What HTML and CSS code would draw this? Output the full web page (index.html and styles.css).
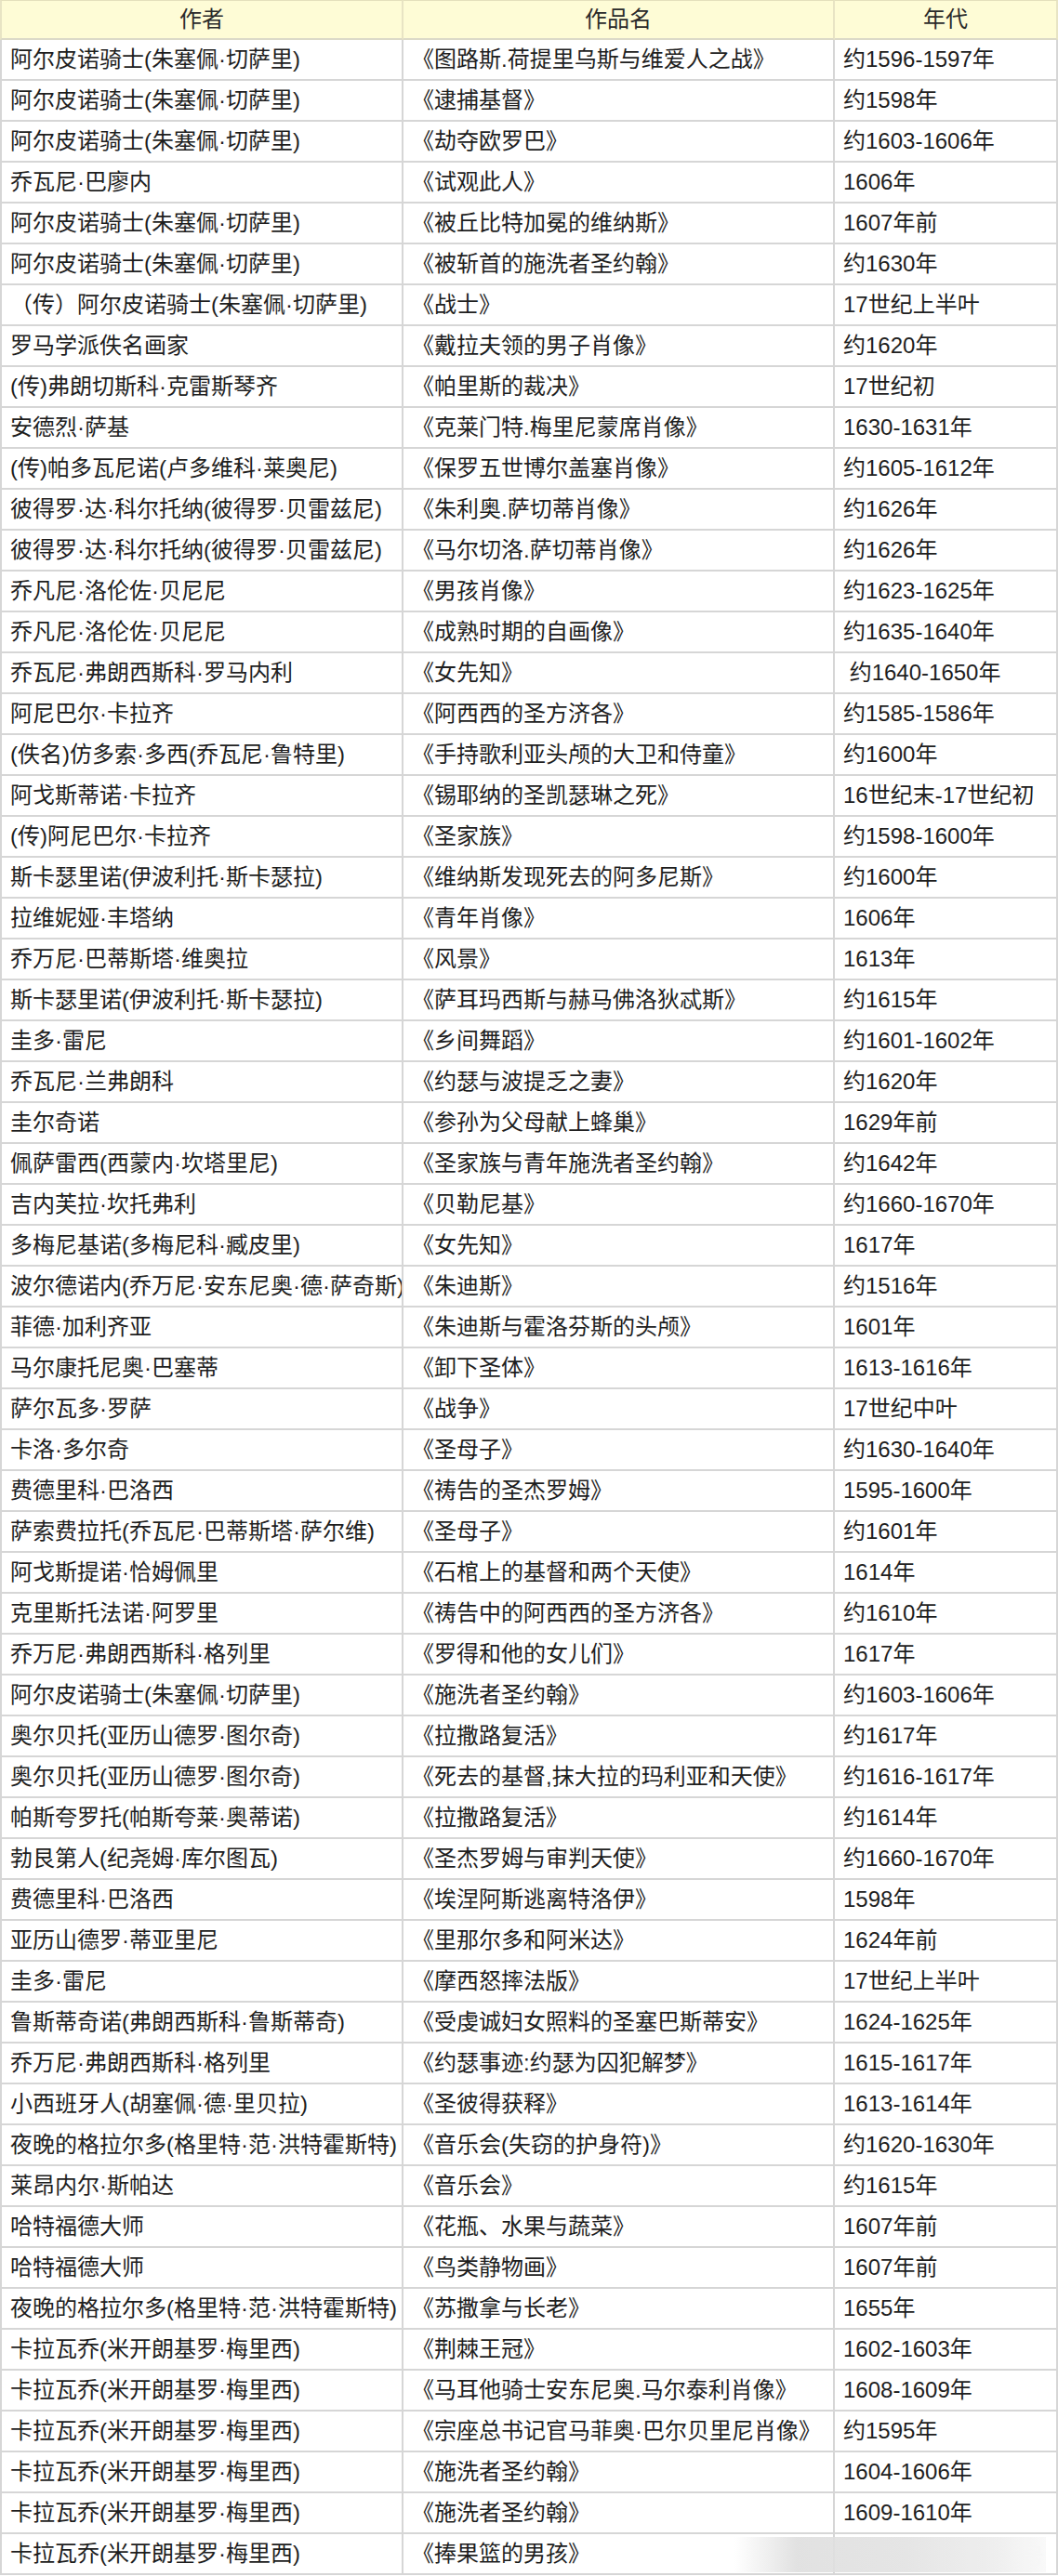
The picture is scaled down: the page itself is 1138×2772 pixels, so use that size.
FILE: index.html
```html
<!DOCTYPE html>
<html lang="zh-CN">
<head>
<meta charset="utf-8">
<title>作品表</title>
<link rel="stylesheet" href="styles.css">
</head>
<body>
<div class="sheet">
<table class="works">
<colgroup><col class="c-author"><col class="c-title"><col class="c-year"></colgroup>
<thead>
<tr><th>作者</th><th>作品名</th><th>年代</th></tr>
</thead>
<tbody>
<tr><td>阿尔皮诺骑士(朱塞佩·切萨里)</td><td>《图路斯.荷提里乌斯与维爱人之战》</td><td>约1596-1597年</td></tr>
<tr><td>阿尔皮诺骑士(朱塞佩·切萨里)</td><td>《逮捕基督》</td><td>约1598年</td></tr>
<tr><td>阿尔皮诺骑士(朱塞佩·切萨里)</td><td>《劫夺欧罗巴》</td><td>约1603-1606年</td></tr>
<tr><td>乔瓦尼·巴廖内</td><td>《试观此人》</td><td>1606年</td></tr>
<tr><td>阿尔皮诺骑士(朱塞佩·切萨里)</td><td>《被丘比特加冕的维纳斯》</td><td>1607年前</td></tr>
<tr><td>阿尔皮诺骑士(朱塞佩·切萨里)</td><td>《被斩首的施洗者圣约翰》</td><td>约1630年</td></tr>
<tr><td>（传）阿尔皮诺骑士(朱塞佩·切萨里)</td><td>《战士》</td><td>17世纪上半叶</td></tr>
<tr><td>罗马学派佚名画家</td><td>《戴拉夫领的男子肖像》</td><td>约1620年</td></tr>
<tr><td>(传)弗朗切斯科·克雷斯琴齐</td><td>《帕里斯的裁决》</td><td>17世纪初</td></tr>
<tr><td>安德烈·萨基</td><td>《克莱门特.梅里尼蒙席肖像》</td><td>1630-1631年</td></tr>
<tr><td>(传)帕多瓦尼诺(卢多维科·莱奥尼)</td><td>《保罗五世博尔盖塞肖像》</td><td>约1605-1612年</td></tr>
<tr><td>彼得罗·达·科尔托纳(彼得罗·贝雷兹尼)</td><td>《朱利奥.萨切蒂肖像》</td><td>约1626年</td></tr>
<tr><td>彼得罗·达·科尔托纳(彼得罗·贝雷兹尼)</td><td>《马尔切洛.萨切蒂肖像》</td><td>约1626年</td></tr>
<tr><td>乔凡尼·洛伦佐·贝尼尼</td><td>《男孩肖像》</td><td>约1623-1625年</td></tr>
<tr><td>乔凡尼·洛伦佐·贝尼尼</td><td>《成熟时期的自画像》</td><td>约1635-1640年</td></tr>
<tr><td>乔瓦尼·弗朗西斯科·罗马内利</td><td>《女先知》</td><td>&nbsp;约1640-1650年</td></tr>
<tr><td>阿尼巴尔·卡拉齐</td><td>《阿西西的圣方济各》</td><td>约1585-1586年</td></tr>
<tr><td>(佚名)仿多索·多西(乔瓦尼·鲁特里)</td><td>《手持歌利亚头颅的大卫和侍童》</td><td>约1600年</td></tr>
<tr><td>阿戈斯蒂诺·卡拉齐</td><td>《锡耶纳的圣凯瑟琳之死》</td><td>16世纪末-17世纪初</td></tr>
<tr><td>(传)阿尼巴尔·卡拉齐</td><td>《圣家族》</td><td>约1598-1600年</td></tr>
<tr><td>斯卡瑟里诺(伊波利托·斯卡瑟拉)</td><td>《维纳斯发现死去的阿多尼斯》</td><td>约1600年</td></tr>
<tr><td>拉维妮娅·丰塔纳</td><td>《青年肖像》</td><td>1606年</td></tr>
<tr><td>乔万尼·巴蒂斯塔·维奥拉</td><td>《风景》</td><td>1613年</td></tr>
<tr><td>斯卡瑟里诺(伊波利托·斯卡瑟拉)</td><td>《萨耳玛西斯与赫马佛洛狄忒斯》</td><td>约1615年</td></tr>
<tr><td>圭多·雷尼</td><td>《乡间舞蹈》</td><td>约1601-1602年</td></tr>
<tr><td>乔瓦尼·兰弗朗科</td><td>《约瑟与波提乏之妻》</td><td>约1620年</td></tr>
<tr><td>圭尔奇诺</td><td>《参孙为父母献上蜂巢》</td><td>1629年前</td></tr>
<tr><td>佩萨雷西(西蒙内·坎塔里尼)</td><td>《圣家族与青年施洗者圣约翰》</td><td>约1642年</td></tr>
<tr><td>吉内芙拉·坎托弗利</td><td>《贝勒尼基》</td><td>约1660-1670年</td></tr>
<tr><td>多梅尼基诺(多梅尼科·臧皮里)</td><td>《女先知》</td><td>1617年</td></tr>
<tr><td>波尔德诺内(乔万尼·安东尼奥·德·萨奇斯)</td><td>《朱迪斯》</td><td>约1516年</td></tr>
<tr><td>菲德·加利齐亚</td><td>《朱迪斯与霍洛芬斯的头颅》</td><td>1601年</td></tr>
<tr><td>马尔康托尼奥·巴塞蒂</td><td>《卸下圣体》</td><td>1613-1616年</td></tr>
<tr><td>萨尔瓦多·罗萨</td><td>《战争》</td><td>17世纪中叶</td></tr>
<tr><td>卡洛·多尔奇</td><td>《圣母子》</td><td>约1630-1640年</td></tr>
<tr><td>费德里科·巴洛西</td><td>《祷告的圣杰罗姆》</td><td>1595-1600年</td></tr>
<tr><td>萨索费拉托(乔瓦尼·巴蒂斯塔·萨尔维)</td><td>《圣母子》</td><td>约1601年</td></tr>
<tr><td>阿戈斯提诺·恰姆佩里</td><td>《石棺上的基督和两个天使》</td><td>1614年</td></tr>
<tr><td>克里斯托法诺·阿罗里</td><td>《祷告中的阿西西的圣方济各》</td><td>约1610年</td></tr>
<tr><td>乔万尼·弗朗西斯科·格列里</td><td>《罗得和他的女儿们》</td><td>1617年</td></tr>
<tr><td>阿尔皮诺骑士(朱塞佩·切萨里)</td><td>《施洗者圣约翰》</td><td>约1603-1606年</td></tr>
<tr><td>奥尔贝托(亚历山德罗·图尔奇)</td><td>《拉撒路复活》</td><td>约1617年</td></tr>
<tr><td>奥尔贝托(亚历山德罗·图尔奇)</td><td>《死去的基督,抹大拉的玛利亚和天使》</td><td>约1616-1617年</td></tr>
<tr><td>帕斯夸罗托(帕斯夸莱·奥蒂诺)</td><td>《拉撒路复活》</td><td>约1614年</td></tr>
<tr><td>勃艮第人(纪尧姆·库尔图瓦)</td><td>《圣杰罗姆与审判天使》</td><td>约1660-1670年</td></tr>
<tr><td>费德里科·巴洛西</td><td>《埃涅阿斯逃离特洛伊》</td><td>1598年</td></tr>
<tr><td>亚历山德罗·蒂亚里尼</td><td>《里那尔多和阿米达》</td><td>1624年前</td></tr>
<tr><td>圭多·雷尼</td><td>《摩西怒摔法版》</td><td>17世纪上半叶</td></tr>
<tr><td>鲁斯蒂奇诺(弗朗西斯科·鲁斯蒂奇)</td><td>《受虔诚妇女照料的圣塞巴斯蒂安》</td><td>1624-1625年</td></tr>
<tr><td>乔万尼·弗朗西斯科·格列里</td><td>《约瑟事迹:约瑟为囚犯解梦》</td><td>1615-1617年</td></tr>
<tr><td>小西班牙人(胡塞佩·德·里贝拉)</td><td>《圣彼得获释》</td><td>1613-1614年</td></tr>
<tr><td>夜晚的格拉尔多(格里特·范·洪特霍斯特)</td><td>《音乐会(失窃的护身符)》</td><td>约1620-1630年</td></tr>
<tr><td>莱昂内尔·斯帕达</td><td>《音乐会》</td><td>约1615年</td></tr>
<tr><td>哈特福德大师</td><td>《花瓶、水果与蔬菜》</td><td>1607年前</td></tr>
<tr><td>哈特福德大师</td><td>《鸟类静物画》</td><td>1607年前</td></tr>
<tr><td>夜晚的格拉尔多(格里特·范·洪特霍斯特)</td><td>《苏撒拿与长老》</td><td>1655年</td></tr>
<tr><td>卡拉瓦乔(米开朗基罗·梅里西)</td><td>《荆棘王冠》</td><td>1602-1603年</td></tr>
<tr><td>卡拉瓦乔(米开朗基罗·梅里西)</td><td>《马耳他骑士安东尼奥.马尔泰利肖像》</td><td>1608-1609年</td></tr>
<tr><td>卡拉瓦乔(米开朗基罗·梅里西)</td><td>《宗座总书记官马菲奥·巴尔贝里尼肖像》</td><td>约1595年</td></tr>
<tr><td>卡拉瓦乔(米开朗基罗·梅里西)</td><td>《施洗者圣约翰》</td><td>1604-1606年</td></tr>
<tr><td>卡拉瓦乔(米开朗基罗·梅里西)</td><td>《施洗者圣约翰》</td><td>1609-1610年</td></tr>
<tr><td>卡拉瓦乔(米开朗基罗·梅里西)</td><td>《捧果篮的男孩》</td><td></td></tr>
</tbody>
</table>
<div class="watermark"><span class="wm-text">号</span></div>
</div>
</body>
</html>
```
FILE: styles.css
```css
html, body {
  margin: 0;
  padding: 0;
  background: #ffffff;
}

.sheet {
  position: relative;
  width: 1138px;
}

.works {
  width: 1138px;
  table-layout: fixed;
  border-collapse: separate;
  border-spacing: 0;
  font-family: "Liberation Sans", "Noto Sans CJK SC", sans-serif;
  font-size: 24px;
  color: #1e1e1e;
}

.c-author { width: 434px; }
.c-title { width: 464px; }
.c-year { width: 240px; }

.works th,
.works td {
  padding: 0 0 0 9px;
  white-space: nowrap;
  overflow: hidden;
  vertical-align: middle;
  text-align: left;
  font-weight: normal;
  border-right: 2px solid #d6d6d6;
  border-bottom: 2px solid #d6d6d6;
  line-height: 28px;
}

.works th:first-child,
.works td:first-child {
  border-left: 2px solid #d6d6d6;
}

.works thead tr {
  height: 43px;
}

.works th {
  background: #fefcd6;
  text-align: center;
  padding: 0;
  border-top: 1px solid #e4e0bc;
  border-right-color: #e8e4c4;
  border-bottom-color: #dcdac8;
  color: #2a2a2a;
}

.works th:first-child {
  border-left-color: #e8e4c4;
}

.works tbody tr {
  height: 44px;
}

.watermark {
  position: absolute;
  left: 790px;
  top: 2730px;
  width: 335px;
  height: 38px;
  background: linear-gradient(to right, rgba(222, 222, 222, 0), #dedede 20%, #e2e2e2 55%, #eeeeee 85%, rgba(245, 245, 245, 0.6));
  opacity: 0.9;
}

.wm-text {
  position: absolute;
  right: 2px;
  top: 6px;
  font-family: "Noto Sans CJK SC", sans-serif;
  font-size: 22px;
  line-height: 24px;
  color: #f6f6f6;
}
```
